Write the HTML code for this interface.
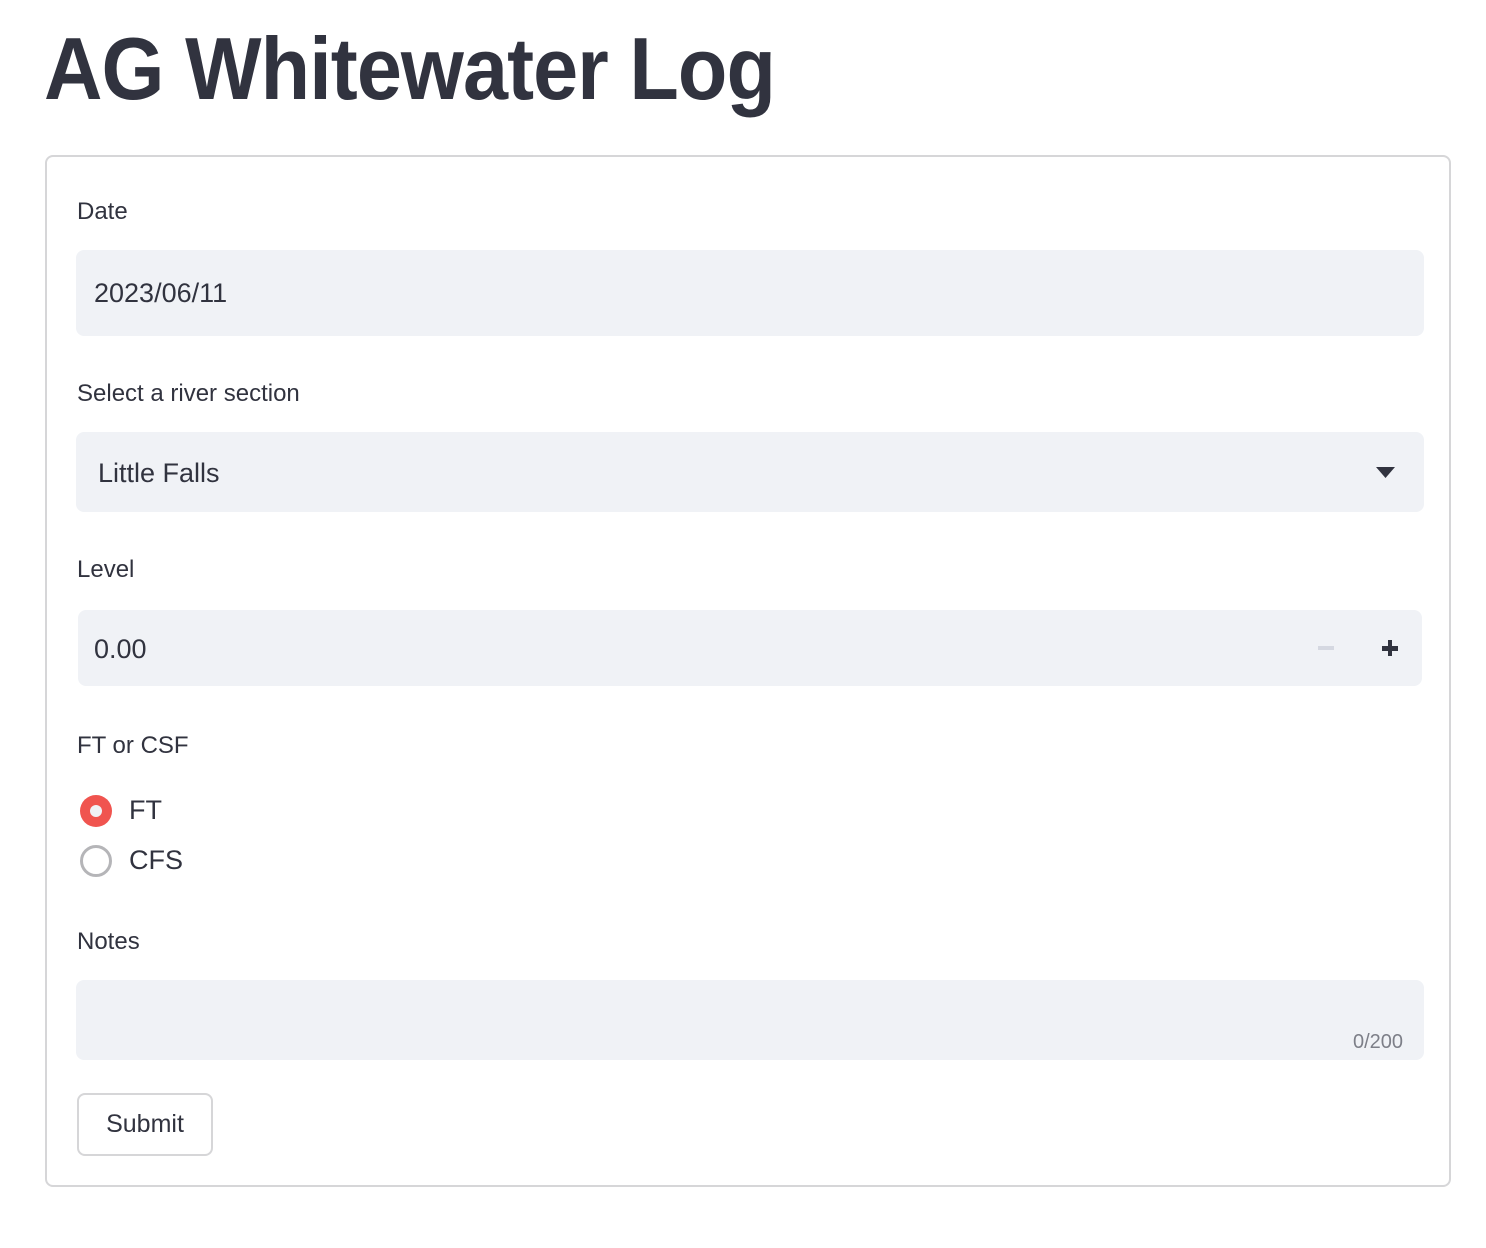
<!DOCTYPE html>
<html><head><meta charset="utf-8"><style>
*{margin:0;padding:0;box-sizing:border-box}
body{width:1486px;height:1248px;background:#fff;font-family:"Liberation Sans",sans-serif;color:#31333f;position:relative;overflow:hidden}
.a{position:absolute}
.t{left:44px;top:18px;font-size:88px;font-weight:bold;transform:scaleX(0.92);transform-origin:left top;white-space:nowrap;letter-spacing:-1px}
.card{left:45px;top:155px;width:1406px;height:1032px;border:2px solid #d6d6d8;border-radius:8px}
.lbl{font-size:24px;left:77px}
.box{background:#f0f2f6;border-radius:8px}
.val{font-size:27px}
</style></head><body>
<div class="a t">AG Whitewater Log</div>
<div class="a card"></div>
<div class="a lbl" style="top:198px">Date</div>
<div class="a box" style="left:76px;top:250px;width:1348px;height:86px"></div>
<div class="a val" style="left:94px;top:278px">2023/06/11</div>
<div class="a lbl" style="top:380px">Select a river section</div>
<div class="a box" style="left:76px;top:432px;width:1348px;height:80px"></div>
<div class="a val" style="left:98px;top:458px">Little Falls</div>
<svg class="a" style="left:1376px;top:467px" width="20" height="12"><path d="M0 0H19L9.5 11Z" fill="#31333f"/></svg>
<div class="a lbl" style="top:556px">Level</div>
<div class="a box" style="left:78px;top:610px;width:1344px;height:76px"></div>
<div class="a val" style="left:94px;top:634px">0.00</div>
<div class="a" style="left:1318px;top:646px;width:16px;height:4px;background:#d5d8e1"></div>
<div class="a" style="left:1382px;top:646px;width:16px;height:5px;background:#31333f"></div>
<div class="a" style="left:1388px;top:640px;width:4px;height:16px;background:#31333f"></div>
<div class="a lbl" style="top:732px">FT or CSF</div>
<div class="a" style="left:80px;top:795px;width:32px;height:32px;border-radius:50%;background:#f0544f"></div>
<div class="a" style="left:90px;top:805px;width:12px;height:12px;border-radius:50%;background:#f0f2f6"></div>
<div class="a val" style="left:129px;top:795px">FT</div>
<div class="a" style="left:80px;top:845px;width:32px;height:32px;border-radius:50%;border:3px solid #b5b5b8"></div>
<div class="a val" style="left:129px;top:845px">CFS</div>
<div class="a lbl" style="top:928px">Notes</div>
<div class="a box" style="left:76px;top:980px;width:1348px;height:80px"></div>
<div class="a" style="left:1353px;top:1031px;font-size:20px;color:#7d7f88">0/200</div>
<div class="a" style="left:77px;top:1093px;width:136px;height:63px;border:2px solid #d6d6d8;border-radius:8px;font-size:25px;text-align:center;line-height:59px">Submit</div>
</body></html>
